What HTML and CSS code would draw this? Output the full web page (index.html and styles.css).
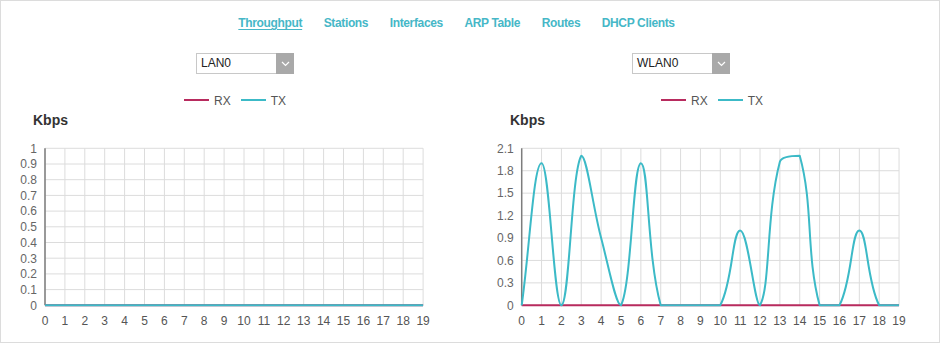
FILE: index.html
```html
<!DOCTYPE html>
<html lang="en">
<head>
    <meta charset="UTF-8">
    <meta name="viewport" content="width=device-width, initial-scale=1.0">
    <title>Throughput</title>
    <link rel="stylesheet" href="styles.css">
</head>
<body>
    <div class="page">
        <div class="tabs">
            <a class="tab active" href="#">Throughput</a>
            <a class="tab" href="#">Stations</a>
            <a class="tab" href="#">Interfaces</a>
            <a class="tab" href="#">ARP Table</a>
            <a class="tab" href="#">Routes</a>
            <a class="tab" href="#">DHCP Clients</a>
        </div>
        <div class="panels">
            <div class="panel panel-lan">
                <div class="dropdown">
                    <span class="dropdown-text">LAN0</span>
                    <span class="dropdown-arrow">
                        <svg width="9" height="6" viewBox="0 0 9 6"><polyline points="1,1 4.5,4.5 8,1" fill="none" stroke="#fff" stroke-width="1.2"/></svg>
                    </span>
                </div>
                <div class="legend">
                    <span class="swatch rx"></span><span class="legend-label">RX</span>
                    <span class="swatch tx"></span><span class="legend-label">TX</span>
                </div>
                <div class="unit">Kbps</div>
                <svg class="chart" id="chart-lan" width="469" height="210"></svg>
            </div>
            <div class="panel panel-wlan">
                <div class="dropdown">
                    <span class="dropdown-text">WLAN0</span>
                    <span class="dropdown-arrow">
                        <svg width="9" height="6" viewBox="0 0 9 6"><polyline points="1,1 4.5,4.5 8,1" fill="none" stroke="#fff" stroke-width="1.2"/></svg>
                    </span>
                </div>
                <div class="legend">
                    <span class="swatch rx"></span><span class="legend-label">RX</span>
                    <span class="swatch tx"></span><span class="legend-label">TX</span>
                </div>
                <div class="unit">Kbps</div>
                <svg class="chart" id="chart-wlan" width="469" height="210"></svg>
            </div>
        </div>
    </div>

    <script>
        const NS = 'http://www.w3.org/2000/svg';
        const TOP = 18.3;
        const BOTTOM = 175.3;
        const RX_COLOR = '#b82b5e';
        const TX_COLOR = '#3cbac7';

        function add(svg, name, attrs, content) {
            const node = document.createElementNS(NS, name);
            for (const key in attrs) {
                node.setAttribute(key, attrs[key]);
            }
            if (content !== undefined) node.textContent = content;
            svg.appendChild(node);
            return node;
        }

        function clamp(v, a, b) {
            return Math.max(Math.min(a, b), Math.min(Math.max(a, b), v));
        }

        // smooth line through the points, no bumps past the neighbouring values
        function splinePath(pts, tension, box) {
            const ctrl = pts.map(function(p, i) {
                const prev = pts[i - 1] || p;
                const next = pts[i + 1] || p;
                const d01 = Math.hypot(p.x - prev.x, p.y - prev.y);
                const d12 = Math.hypot(next.x - p.x, next.y - p.y);
                let s01 = d01 / (d01 + d12);
                let s12 = d12 / (d01 + d12);
                if (isNaN(s01)) s01 = 0;
                if (isNaN(s12)) s12 = 0;
                const fa = tension * s01;
                const fb = tension * s12;
                return {
                    inX: clamp(p.x - fa * (next.x - prev.x), box.left, box.right),
                    inY: clamp(clamp(p.y - fa * (next.y - prev.y), prev.y, p.y), box.top, box.bottom),
                    outX: clamp(p.x + fb * (next.x - prev.x), box.left, box.right),
                    outY: clamp(clamp(p.y + fb * (next.y - prev.y), p.y, next.y), box.top, box.bottom)
                };
            });
            let d = 'M' + pts[0].x + ' ' + pts[0].y;
            for (let i = 1; i < pts.length; i++) {
                d += ' C' + ctrl[i - 1].outX + ' ' + ctrl[i - 1].outY + ' ' +
                     ctrl[i].inX + ' ' + ctrl[i].inY + ' ' + pts[i].x + ' ' + pts[i].y;
            }
            return d;
        }

        function drawChart(id, left, step, max, ticks, rx, tx) {
            const svg = document.getElementById(id);
            const right = left + step * 19;
            const yOf = v => BOTTOM - v / max * (BOTTOM - TOP);
            const box = { left: left, right: right, top: TOP, bottom: BOTTOM };

            for (let i = 0; i <= ticks; i++) {
                const value = Number((max * i / ticks).toFixed(1));
                const y = yOf(value);
                add(svg, 'line', { x1: left, y1: y, x2: right, y2: y, stroke: '#dcdcdc', 'stroke-width': 1 });
                add(svg, 'text', { x: left - 8, y: y + 4.3, 'text-anchor': 'end', class: 'tick-y' }, String(value));
            }
            for (let i = 0; i < 20; i++) {
                const x = left + i * step;
                add(svg, 'line', { x1: x, y1: TOP, x2: x, y2: BOTTOM, stroke: '#dcdcdc', 'stroke-width': 1 });
                add(svg, 'text', { x: x, y: 194.8, 'text-anchor': 'middle', class: 'tick-x' }, String(i));
            }
            add(svg, 'line', { x1: left, y1: TOP, x2: left, y2: BOTTOM, stroke: '#7d7d7d', 'stroke-width': 1.5 });

            [[rx, RX_COLOR], [tx, TX_COLOR]].forEach(function(series) {
                const pts = series[0].map((v, i) => ({ x: left + i * step, y: yOf(v) }));
                add(svg, 'path', {
                    d: splinePath(pts, 0.4, box),
                    fill: 'none',
                    stroke: series[1],
                    'stroke-width': 2,
                    'stroke-linejoin': 'round'
                });
            });
        }

        const zeros = new Array(20).fill(0);
        drawChart('chart-lan', 44, 19.9, 1, 10, zeros, zeros);
        drawChart('chart-wlan', 51.7, 19.86, 2.1, 7, zeros,
            [0, 1.9, 0, 2, 0.9, 0, 1.9, 0, 0, 0, 0, 1, 0, 1.92, 2, 0, 0, 1, 0, 0]);
    </script>
</body>
</html>
```

FILE: styles.css
```css
body {
    margin: 0;
    font-family: "Liberation Sans", Arial, sans-serif;
    background-color: #fff;
}
.page {
    box-sizing: border-box;
    width: 940px;
    height: 343px;
    border: 1px solid #dcdcdc;
}
.tabs {
    display: flex;
    justify-content: center;
    gap: 21.5px;
    height: 44px;
    line-height: 44px;
    padding-right: 27px;
}
.tab {
    color: #46b7c7;
    font-size: 12px;
    font-weight: bold;
    letter-spacing: -0.35px;
    text-decoration: none;
}
.tab.active {
    text-decoration: underline;
    text-underline-offset: 2px;
}
.panels {
    display: grid;
    grid-template-columns: 469px 469px;
}
.panel {
    display: flex;
    flex-direction: column;
}
.dropdown {
    display: flex;
    width: 98px;
    height: 21px;
    margin-top: 8px;
}
.dropdown-text {
    flex: 1;
    box-sizing: border-box;
    border: 1px solid #c8c8c8;
    border-right: none;
    padding-left: 4px;
    font-size: 12px;
    line-height: 19px;
    color: #222;
}
.dropdown-arrow {
    width: 18px;
    display: flex;
    align-items: center;
    justify-content: center;
    background-color: #a9a9a9;
}
.legend {
    display: flex;
    align-items: center;
    height: 16px;
    margin-top: 19px;
    font-size: 12px;
    color: #555;
}
.swatch {
    width: 25px;
    height: 2px;
    margin-right: 5px;
    margin-bottom: 3px;
}
.legend-label + .swatch {
    margin-left: 10px;
}
.swatch.rx {
    background-color: #b82b5e;
}
.swatch.tx {
    background-color: #3cbac7;
}
.unit {
    height: 20px;
    line-height: 20px;
    margin-top: 1px;
    font-size: 14px;
    font-weight: bold;
    color: #333;
}
.chart {
    display: block;
}
.tick-y {
    font-size: 12px;
    fill: #666;
}
.tick-x {
    font-size: 12px;
    fill: #555;
}

.panel-lan .dropdown { margin-left: 195px; }
.panel-lan .legend { padding-left: 183px; }
.panel-lan .unit { padding-left: 32px; }

.panel-wlan .dropdown { margin-left: 162px; }
.panel-wlan .legend { padding-left: 191px; }
.panel-wlan .unit { padding-left: 40px; }
```
